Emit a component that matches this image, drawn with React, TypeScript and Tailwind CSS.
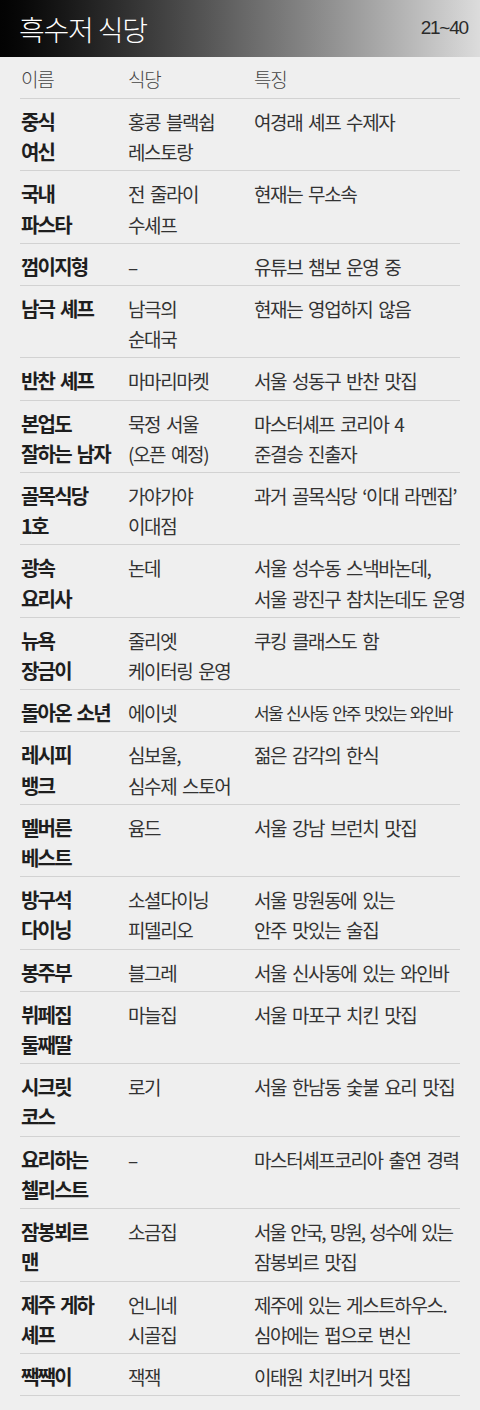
interface Row {
  name: string[];
  place: string[];
  note: string[];
}

const rows: Row[] = [
  { name: ["중식", "여신"], place: ["홍콩 블랙쉽", "레스토랑"], note: ["여경래 셰프 수제자"] },
  { name: ["국내", "파스타"], place: ["전 줄라이", "수셰프"], note: ["현재는 무소속"] },
  { name: ["껌이지형"], place: ["–"], note: ["유튜브 챔보 운영 중"] },
  { name: ["남극 셰프"], place: ["남극의", "순대국"], note: ["현재는 영업하지 않음"] },
  { name: ["반찬 셰프"], place: ["마마리마켓"], note: ["서울 성동구 반찬 맛집"] },
  { name: ["본업도", "잘하는 남자"], place: ["묵정 서울", "(오픈 예정)"], note: ["마스터셰프 코리아 4", "준결승 진출자"] },
  { name: ["골목식당", "1호"], place: ["가야가야", "이대점"], note: ["과거 골목식당 ‘이대 라멘집’"] },
  { name: ["광속", "요리사"], place: ["논데"], note: ["서울 성수동 스낵바논데,", "서울 광진구 참치논데도 운영"] },
  { name: ["뉴욕", "장금이"], place: ["줄리엣", "케이터링 운영"], note: ["쿠킹 클래스도 함"] },
  { name: ["돌아온 소년"], place: ["에이넷"], note: ["서울 신사동 안주 맛있는 와인바"] },
  { name: ["레시피", "뱅크"], place: ["심보울,", "심수제 스토어"], note: ["젊은 감각의 한식"] },
  { name: ["멜버른", "베스트"], place: ["윰드"], note: ["서울 강남 브런치 맛집"] },
  { name: ["방구석", "다이닝"], place: ["소셜다이닝", "피델리오"], note: ["서울 망원동에 있는", "안주 맛있는 술집"] },
  { name: ["봉주부"], place: ["블그레"], note: ["서울 신사동에 있는 와인바"] },
  { name: ["뷔페집", "둘째딸"], place: ["마늘집"], note: ["서울 마포구 치킨 맛집"] },
  { name: ["시크릿", "코스"], place: ["로기"], note: ["서울 한남동 숯불 요리 맛집"] },
  { name: ["요리하는", "첼리스트"], place: ["–"], note: ["마스터셰프코리아 출연 경력"] },
  { name: ["잠봉뵈르", "맨"], place: ["소금집"], note: ["서울 안국, 망원, 성수에 있는", "잠봉뵈르 맛집"] },
  { name: ["제주 게하", "셰프"], place: ["언니네", "시골집"], note: ["제주에 있는 게스트하우스.", "심야에는 펍으로 변신"] },
  { name: ["짹짹이"], place: ["잭잭"], note: ["이태원 치킨버거 맛집"] },
];

const squeezed: Record<string, string> = {
  "서울 신사동 안주 맛있는 와인바": "text-[17px] tracking-[-1.7px] [word-spacing:2px]",
  "서울 안국, 망원, 성수에 있는": "tracking-[-2px]",
};

const font = "font-['Noto_Sans_CJK_KR','Noto_Sans',sans-serif]";

function Lines({ lines }: { lines: string[] }) {
  return (
    <>
      {lines.map((l) => (
        <div key={l} className={`whitespace-nowrap ${squeezed[l] ?? ""}`}>
          {l}
        </div>
      ))}
    </>
  );
}

export default function App() {
  return (
    <div className={`w-[480px] h-[1410px] overflow-hidden bg-[#efefef] ${font}`}>
      <header className="flex h-[57px] items-center justify-between bg-gradient-to-r from-[#030303] via-[#666] to-[#dcdcdc] pl-[19px] pr-[12px]">
        <h1 className="text-[28px] font-light leading-none tracking-[-1.2px] text-white">흑수저 식당</h1>
        <span className="font-['Liberation_Sans',sans-serif] text-[19px] tracking-[-1.2px] text-[#2a2a2a]">21~40</span>
      </header>

      <div className="mx-[20px]">
        <div className="grid h-[42px] grid-cols-[107px_126px_1fr] items-center border-b border-[#d2d2d2] pl-px pt-[4px] text-[19px] font-light tracking-[-1.2px] text-[#444]">
          <span>이름</span>
          <span>식당</span>
          <span>특징</span>
        </div>
        {rows.map((r) => (
          <div
            key={r.name.join("")}
            className="grid grid-cols-[107px_126px_1fr] border-b border-[#d2d2d2] pl-px pt-[8px] pb-[3px] text-[19px] leading-[30.2px] tracking-[-1.4px] [word-spacing:3px]"
          >
            <div className="text-[20px] font-bold tracking-[-1.8px] text-[#1e1e1e]">
              <Lines lines={r.name} />
            </div>
            <div className="font-normal text-[#333]">
              <Lines lines={r.place} />
            </div>
            <div className="font-normal text-[#333]">
              <Lines lines={r.note} />
            </div>
          </div>
        ))}
      </div>
    </div>
  );
}
